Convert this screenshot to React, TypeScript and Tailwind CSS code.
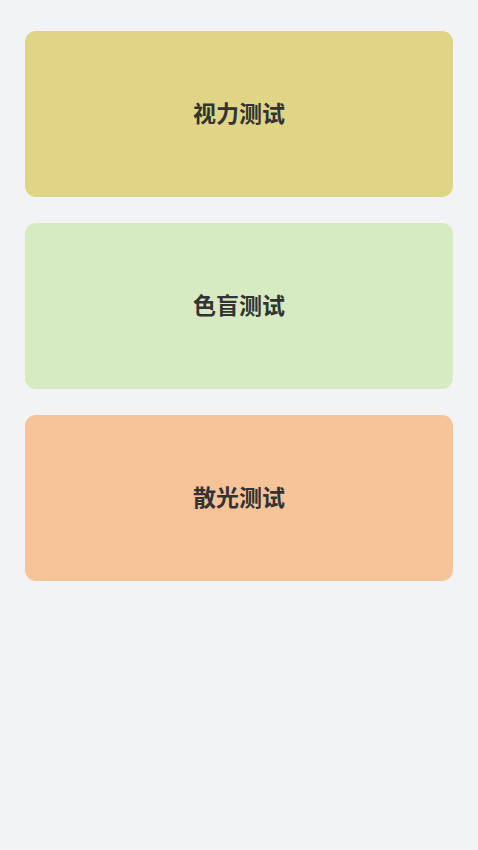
import React from "react";

const tests = [
  { name: "视力测试", color: "bg-[#e0d487]" },
  { name: "色盲测试", color: "bg-[#d6ebc1]" },
  { name: "散光测试", color: "bg-[#f6c498]" },
];

export default function App() {
  return (
    <div
      className="min-h-screen bg-[#f2f3f5] px-[25px] pt-[31px]"
      style={{ fontFamily: '"Noto Sans CJK SC", "Noto Sans", sans-serif' }}
    >
      <div className="flex flex-col gap-[26px]">
        {tests.map((t) => (
          <div
            key={t.name}
            className={`${t.color} h-[166px] rounded-[11px] flex items-center justify-center`}
          >
            <span className="mb-[4px] text-[23px] leading-none font-bold text-[#333333]">
              {t.name}
            </span>
          </div>
        ))}
      </div>
    </div>
  );
}
